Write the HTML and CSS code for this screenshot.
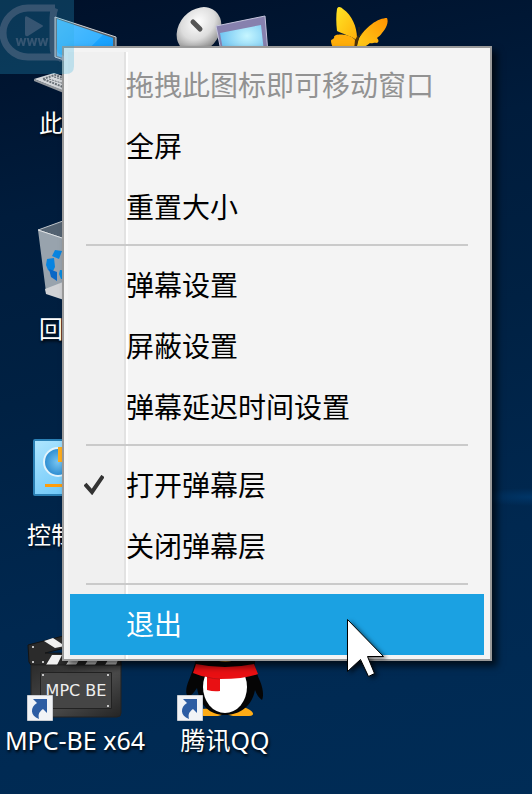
FILE: index.html
```html
<!DOCTYPE html>
<html lang="zh-CN">
<head>
<meta charset="utf-8">
<meta name="viewport" content="width=device-width, initial-scale=1">
<title>桌面</title>
<link rel="stylesheet" href="styles.css">
</head>
<body>
<svg class="defs" aria-hidden="true">
  <defs>
    <linearGradient id="screen" x1="0" y1="0" x2="1" y2="1"><stop offset="0" stop-color="#54c0ff"/><stop offset=".55" stop-color="#38b2ff"/><stop offset=".56" stop-color="#1ba4ff"/><stop offset="1" stop-color="#1296f4"/></linearGradient>
    <radialGradient id="dish" cx=".35" cy=".4" r=".75"><stop offset="0" stop-color="#fff"/><stop offset=".5" stop-color="#dcdcdc"/><stop offset="1" stop-color="#777"/></radialGradient>
    <radialGradient id="glow" cx=".6" cy=".3" r=".7"><stop offset="0" stop-color="#c6f6ff"/><stop offset="1" stop-color="#62bdf0"/></radialGradient>
    <linearGradient id="wing" x1="0" y1="0" x2="1" y2="1"><stop offset="0" stop-color="#ffe526"/><stop offset="1" stop-color="#ffae08"/></linearGradient>
    <linearGradient id="wing-right" x1="0" y1="1" x2="1" y2="0"><stop offset="0" stop-color="#ffd21c"/><stop offset="1" stop-color="#ff9200"/></linearGradient>
    <linearGradient id="panel" x1="0" y1="0" x2="1" y2="1"><stop offset="0" stop-color="#b0e6ff"/><stop offset="1" stop-color="#4fb9f5"/></linearGradient>
    <radialGradient id="disc"><stop offset="0" stop-color="#79c6f2"/><stop offset="1" stop-color="#2b8bd0"/></radialGradient>
    <linearGradient id="slate" x1="0" y1="0" x2="1" y2="1"><stop offset="0" stop-color="#2b2b2b"/><stop offset=".55" stop-color="#4a4a4a"/><stop offset="1" stop-color="#242424"/></linearGradient>
    <g id="shortcut">
      <path d="M27.500 77.500h25v25h-25z" fill="#f1f3f6" stroke="#c9ccd1"/>
      <path d="M33 81h14v14l-4-4c-4 3-5 5-4 10-9-3-9-12-2-16z" fill="#2d5da3"/>
    </g>
  </defs>
</svg>
<main class="desktop">
  <a class="icon pc" href="#">
    <svg class="art" viewBox="0 0 150 106" aria-hidden="true">
      <path d="M55 17 116 37v40L55 57z" fill="#5c646b" stroke="#cfd3d6"/>
      <path d="M57 19 113 38v36L57 56z" fill="url(#screen)"/>
      <path d="M34 79 54 73 98 88 76 96z" fill="#d4d7da"/>
      <path d="m34 79 42 16v3L34 81z" fill="#93989d"/>
      <path d="m43 79 12-4 30 11-12 5z" fill="none" stroke="#697077" stroke-width="2" stroke-dasharray="2 1"/>
      <path d="m49 79 25 8M54 77l25 8" stroke="#697077" stroke-width="1" stroke-dasharray="2 1"/>
    </svg>
    <span class="label">此电脑</span>
  </a>
  <a class="icon network" href="#" aria-label="网络">
    <svg class="art" viewBox="0 0 150 106" aria-hidden="true">
      <ellipse cx="49" cy="30" rx="20" ry="25" transform="rotate(42 49 30)" fill="url(#dish)"/>
      <path d="m43 22 7 7" stroke="#555" stroke-width="5" stroke-linecap="round"/>
      <path d="m66 26 49-10 4 50H74z" fill="#8781ae" stroke="#c4c4dc" stroke-width="1"/>
      <path d="m70 33 41-8 4 36H75z" fill="url(#glow)"/>
    </svg>
  </a>
  <a class="icon butterfly" href="#" aria-label="蝴蝶">
    <svg class="art" viewBox="0 0 150 106" aria-hidden="true">
      <path d="M56 40C52 36 42 34 37 31c-1-8-1-16 0-22 1-3 4-2 6 0 9 6 14 18 14 29z" fill="url(#wing)"/>
      <path d="M55 54H33c2-4-2-9-2-13 0-2 4-2 3-4 0-3 8-3 12-2 5 1 8 3 10 6z" fill="#ffae0a"/>
      <path d="M57 46c0-8 8-17 15-22 5-4 11-6 15-6 2 4-1 11-5 15-1 2-4 4-5 5 2 2 2 4 0 5-3-1-5 1-7 0-3 3-8 5-13 8z" fill="url(#wing-right)"/>
      <path d="m54 50 1-10 3-5 1 3-3 12z" fill="#4d3108"/>
      <path d="M59 36V27m0 9 5-5" stroke="#4d3108" opacity=".6"/>
    </svg>
  </a>
  <a class="icon bin" href="#">
    <svg class="art" viewBox="0 0 150 106" aria-hidden="true">
      <path d="m38 24 36-13 38 12-38 13z" fill="#536271" stroke="#bfc5ca"/>
      <path d="M38 24 74 36l38-13-8 63-31 10-27-10z" fill="#98a3ad"/>
      <path d="m38 24 36 12 38-13" fill="none" stroke="#dfe2e5"/>
      <path d="m45 83 18-7 40 10-30 11-27-9z" fill="#d0d2d5"/>
      <path d="m55 44 7 1-3 8-7-3zM47 53l7-1 1 9-3 6-4-3-2-5z" fill="#0784e0"/>
      <path d="m49 63 8 3v9l-6-4z" fill="#0867c6"/>
      <path d="m60 64 12 1v9l-11-1-2-5z" fill="#078ae0"/>
    </svg>
    <span class="label">回收站</span>
  </a>
  <a class="icon control" href="#">
    <svg class="art" viewBox="0 0 150 106" aria-hidden="true">
      <rect x="34" y="28" width="82" height="55" rx="1" fill="url(#panel)" stroke="#2b80b5" stroke-width="2"/>
      <circle cx="58" cy="50" r="14" fill="url(#disc)" stroke="#e2f3fb" stroke-width="2"/>
      <path d="M58 35h8v15h-8z" fill="#ffad1c"/>
      <path d="M45 72h44v3H45z" fill="#ff9d0a"/>
    </svg>
    <span class="label">控制面板</span>
  </a>
  <a class="icon player" href="#">
    <svg class="art" viewBox="0 0 150 106" aria-hidden="true">
      <path d="m28 27 86-22 3 12-72 18 76 1v12l-90-1-2-3z" fill="#2b2b2b" stroke="#141414"/>
      <path d="m44 23 9-3 12 8-10 2zM52 37h10l-5 10H46zM72 37h10l-6 10H66zM91 37h10l-6 10H85zM111 37h9l-4 10h-11z" fill="#f1f1f1"/>
      <path d="M31 47h90v48q0 4-4 4H31z" fill="url(#slate)" stroke="#222"/>
      <path d="M40.500 54.500h71v36h-71z" fill="#454545" stroke="#222"/>
      <g fill="#f2f2f2"><circle cx="43" cy="57" r="1"/><circle cx="108" cy="57" r="1"/><circle cx="108" cy="88" r="1"/><circle cx="33" cy="29" r="1"/><circle cx="33" cy="44" r="1"/><circle cx="43" cy="44" r="1"/></g>
      <text class="brand" x="76" y="78" text-anchor="middle">MPC BE</text>
      <use href="#shortcut"/>
    </svg>
    <span class="label latin">MPC-BE x64</span>
  </a>
  <a class="icon qq" href="#">
    <svg class="art" viewBox="0 0 150 106" aria-hidden="true">
      <path d="M50 91c-4 4-2 7 4 7h14l7-2 8 2h16c7 0 5-6-6-9z" fill="#ffac16"/>
      <path d="M46 40c-1 7-4 14-7 22-3 7-4 14-1 16 4 0 6-4 9-8 3 18 13 27 28 27s27-9 30-25c2 5 4 8 7 10 2-4 1-12-2-19-3-6-5-14-7-23z" fill="#050505"/>
      <ellipse cx="75" cy="69" rx="22" ry="26" fill="#fff"/>
      <path d="M46 30h59v16q-29 8-59 0z" fill="#050505"/>
      <path d="M66 42h18q-8 4-18 0z" fill="#c98a1c"/>
      <path d="M46 46q29 6 58 0l4 10q-13 5-38 5v12q-6 1-13-1V59q-7-1-14-4z" fill="#e91013"/>
      <path d="M57 59q6 2 13 2" fill="none" stroke="#bd1115"/>
      <use href="#shortcut"/>
    </svg>
    <span class="label latin">腾讯QQ</span>
  </a>
</main>

<div class="menu" role="menu">
  <button class="item" role="menuitem" disabled>拖拽此图标即可移动窗口</button>
  <button class="item" role="menuitem">全屏</button>
  <button class="item" role="menuitem">重置大小</button>
  <hr class="separator">
  <button class="item" role="menuitem">弹幕设置</button>
  <button class="item" role="menuitem">屏蔽设置</button>
  <button class="item" role="menuitem">弹幕延迟时间设置</button>
  <hr class="separator">
  <button class="item" role="menuitemradio" aria-checked="true"><svg class="check" viewBox="0 0 20 20" aria-hidden="true"><path d="m1 9 7 8L19 1" fill="none" stroke="#333" stroke-width="4"/></svg>打开弹幕层</button>
  <button class="item" role="menuitemradio" aria-checked="false">关闭弹幕层</button>
  <hr class="separator">
  <button class="item active" role="menuitem">退出</button>
</div>

<svg class="watermark" viewBox="0 0 74 74" aria-hidden="true">
  <path d="M0 0h74v66q0 8-8 8H0z" fill="#28aadc" opacity=".25"/>
  <g opacity=".2">
    <path d="M55 8H28C14 8 3 20 3 33s11 24 25 24h27q7 0 8 4M55 8q-2 4-2 10v28q0 9 5 11" fill="none" stroke="#e5c8d8" stroke-width="7"/>
    <path d="M25 18q0-3 3-1l14 8q2 1 0 2l-14 9q-3 1-3-2z" fill="#e5c8d8"/>
    <text class="www" x="32" y="46" text-anchor="middle">www</text>
  </g>
</svg>
<svg class="cursor" viewBox="0 0 42 62" aria-hidden="true">
  <path d="M1.500 1.500v52l13-12 8 17 6-3-7-17h16z" fill="#fff" stroke="#000"/>
</svg>
</body>
</html>
```
FILE: styles.css
```css
* { box-sizing: border-box; }

body {
  position: relative;
  margin: 0;
  min-height: 100vh;
  overflow: hidden;
  font-family: "Noto Sans", "Noto Sans CJK SC", sans-serif;
  background:
    radial-gradient(ellipse 60px 9px at 100% 497px, #003f7899, transparent),
    linear-gradient(168deg, #001029 0%, #001c3c 24%, #002143 45%, #002850 70%, #002c56 100%);
}

.defs { position: absolute; width: 0; height: 0; }

.desktop {
  display: grid;
  grid-template-columns: repeat(auto-fill, 150px);
  grid-auto-rows: 140px;
  row-gap: 66px;
}

.icon {
  display: flex;
  flex-direction: column;
  color: #fff;
  text-decoration: none;
}
.pc { grid-area: 1 / 1; }
.network { grid-area: 1 / 2; }
.butterfly { grid-area: 1 / 3; }
.bin { grid-area: 2 / 1; }
.control { grid-area: 3 / 1; }
.player { grid-area: 4 / 1; }
.qq { grid-area: 4 / 2; }

.art { display: block; width: 150px; height: 106px; }
.label {
  font-size: 24px;
  line-height: 34px;
  text-align: center;
  white-space: nowrap;
  text-shadow: 1px 2px 3px #000;
}
.latin { font-size: 25px; line-height: 32px; }
.brand { font: 16px "DejaVu Sans", sans-serif; fill: #eee; }

.menu {
  position: absolute;
  top: 46px;
  left: 62px;
  right: 40px;
  padding: 7px 6px 4px;
  border: 2px solid #999;
  background:
    linear-gradient(90deg, #f0f0f0 56px, #e2e2e2 56px 58px, #fff 58px 60px, transparent 60px) 4px 4px / 60px 100% no-repeat,
    #f4f4f4;
  box-shadow: 5px 5px 7px #000a;
}

.item {
  position: relative;
  display: block;
  width: 100%;
  height: 61px;
  padding: 0 0 3px 56px;
  border: 0;
  background: none;
  color: #000;
  font-family: "Noto Sans CJK SC", sans-serif;
  font-size: 28px;
  line-height: 58px;
  text-align: left;
  white-space: nowrap;
}
.item:disabled { color: #929292; }
.active { background: #1ba1e2; color: #fff; }
.check { position: absolute; left: 14px; top: 20px; width: 20px; height: 20px; }

.separator {
  height: 2px;
  margin: 6px 16px 9px;
  border: 0;
  background: #cacaca;
}

.watermark { position: absolute; top: 0; left: 0; width: 74px; height: 74px; }
.www { font: bold 15px Roboto, sans-serif; fill: #e5c8d8; }

.cursor {
  position: absolute;
  top: 618px;
  left: 346px;
  width: 42px;
  height: 62px;
  filter: drop-shadow(3px 2px 2px #0008);
}
```
